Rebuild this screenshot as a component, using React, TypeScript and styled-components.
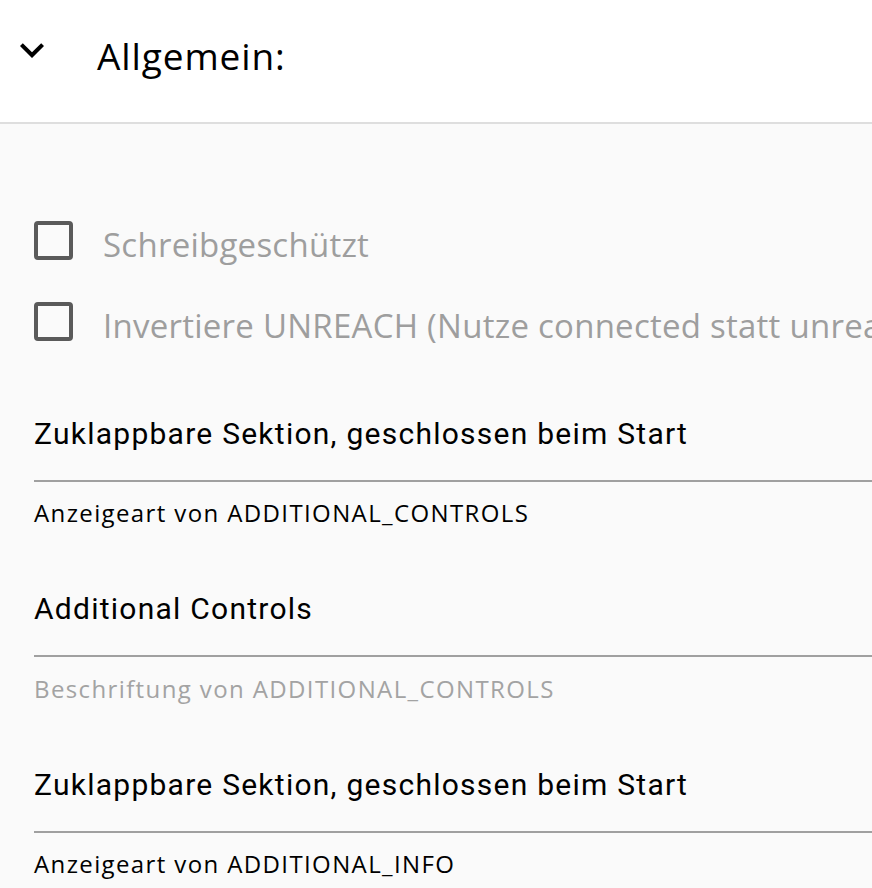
import React from "react";
import styled, { createGlobalStyle } from "styled-components";

const GlobalStyle = createGlobalStyle`
  html, body {
    margin: 0;
    padding: 0;
    background: #fafafa;
    overflow: hidden;
  }
  #root {
    width: 872px;
    min-height: 888px;
    overflow: hidden;
  }
`;

const Page = styled.div`
  display: flex;
  flex-direction: column;
  min-height: 888px;
  background: #fafafa;
`;

const Header = styled.header`
  display: flex;
  align-items: flex-start;
  height: 122px;
  padding-left: 8px;
  background: #ffffff;
  border-bottom: 2px solid #dedede;
  box-sizing: content-box;
`;

const ToggleIcon = styled.svg`
  width: 48px;
  height: 48px;
  margin-top: 26px;
  flex: none;
`;

const Title = styled.h1`
  margin: 31px 0 0 41px;
  font-family: "Open Sans", sans-serif;
  font-weight: 400;
  font-size: 37px;
  line-height: 50px;
  letter-spacing: 0.9px;
  color: #000000;
  white-space: nowrap;
`;

const Body = styled.main`
  display: flex;
  flex-direction: column;
  padding: 97px 0 0 34px;
`;

const CheckList = styled.div`
  display: flex;
  flex-direction: column;
  gap: 39px;
`;

const CheckRow = styled.label`
  display: flex;
  align-items: flex-start;
  height: 42px;
  white-space: nowrap;
`;

const Box = styled.span`
  flex: none;
  width: 39px;
  height: 39px;
  box-sizing: border-box;
  border: 4px solid #5a5a5a;
  border-radius: 4px;
`;

const CheckText = styled.span`
  margin: 3.5px 0 0 30px;
  font-family: "Open Sans", sans-serif;
  font-size: 33px;
  line-height: 40px;
  letter-spacing: 0.25px;
  color: #9e9e9e;
`;

const FieldList = styled.div`
  display: flex;
  flex-direction: column;
  gap: 58.7px;
  margin-top: 68.4px;
`;

const Field = styled.div`
  display: flex;
  flex-direction: column;
`;

const FieldValue = styled.div`
  font-family: Roboto, sans-serif;
  font-size: 30px;
  line-height: 40px;
  letter-spacing: 1.25px;
  color: #000000;
  padding-top: 1.5px;
  padding-bottom: 25.8px;
  border-bottom: 2px solid #a0a0a0;
  white-space: nowrap;
`;

const FieldCaption = styled.div<{ $muted?: boolean }>`
  margin-top: 15.5px;
  font-family: "Open Sans", sans-serif;
  font-size: 24px;
  line-height: 32px;
  letter-spacing: 1.38px;
  color: ${(p) => (p.$muted ? "#a3a3a3" : "#000000")};
  white-space: nowrap;
`;

const fields = [
  { value: "Zuklappbare Sektion, geschlossen beim Start", caption: "Anzeigeart von ADDITIONAL_CONTROLS", muted: false },
  { value: "Additional Controls", caption: "Beschriftung von ADDITIONAL_CONTROLS", muted: true },
  { value: "Zuklappbare Sektion, geschlossen beim Start", caption: "Anzeigeart von ADDITIONAL_INFO", muted: false },
];

export default function App() {
  return (
    <>
      <GlobalStyle />
      <Page>
        <Header>
          <ToggleIcon viewBox="0 0 24 24" aria-hidden="true">
            <path d="M16.59 8.59L12 13.17 7.41 8.59 6 10l6 6 6-6z" fill="#000" />
          </ToggleIcon>
          <Title>Allgemein:</Title>
        </Header>
        <Body>
          <CheckList>
            <CheckRow>
              <Box />
              <CheckText>Schreibgeschützt</CheckText>
            </CheckRow>
            <CheckRow>
              <Box />
              <CheckText>Invertiere UNREACH (Nutze connected statt unreach)</CheckText>
            </CheckRow>
          </CheckList>
          <FieldList>
            {fields.map((f, i) => (
              <Field key={i}>
                <FieldValue>{f.value}</FieldValue>
                <FieldCaption $muted={f.muted}>{f.caption}</FieldCaption>
              </Field>
            ))}
          </FieldList>
        </Body>
      </Page>
    </>
  );
}
